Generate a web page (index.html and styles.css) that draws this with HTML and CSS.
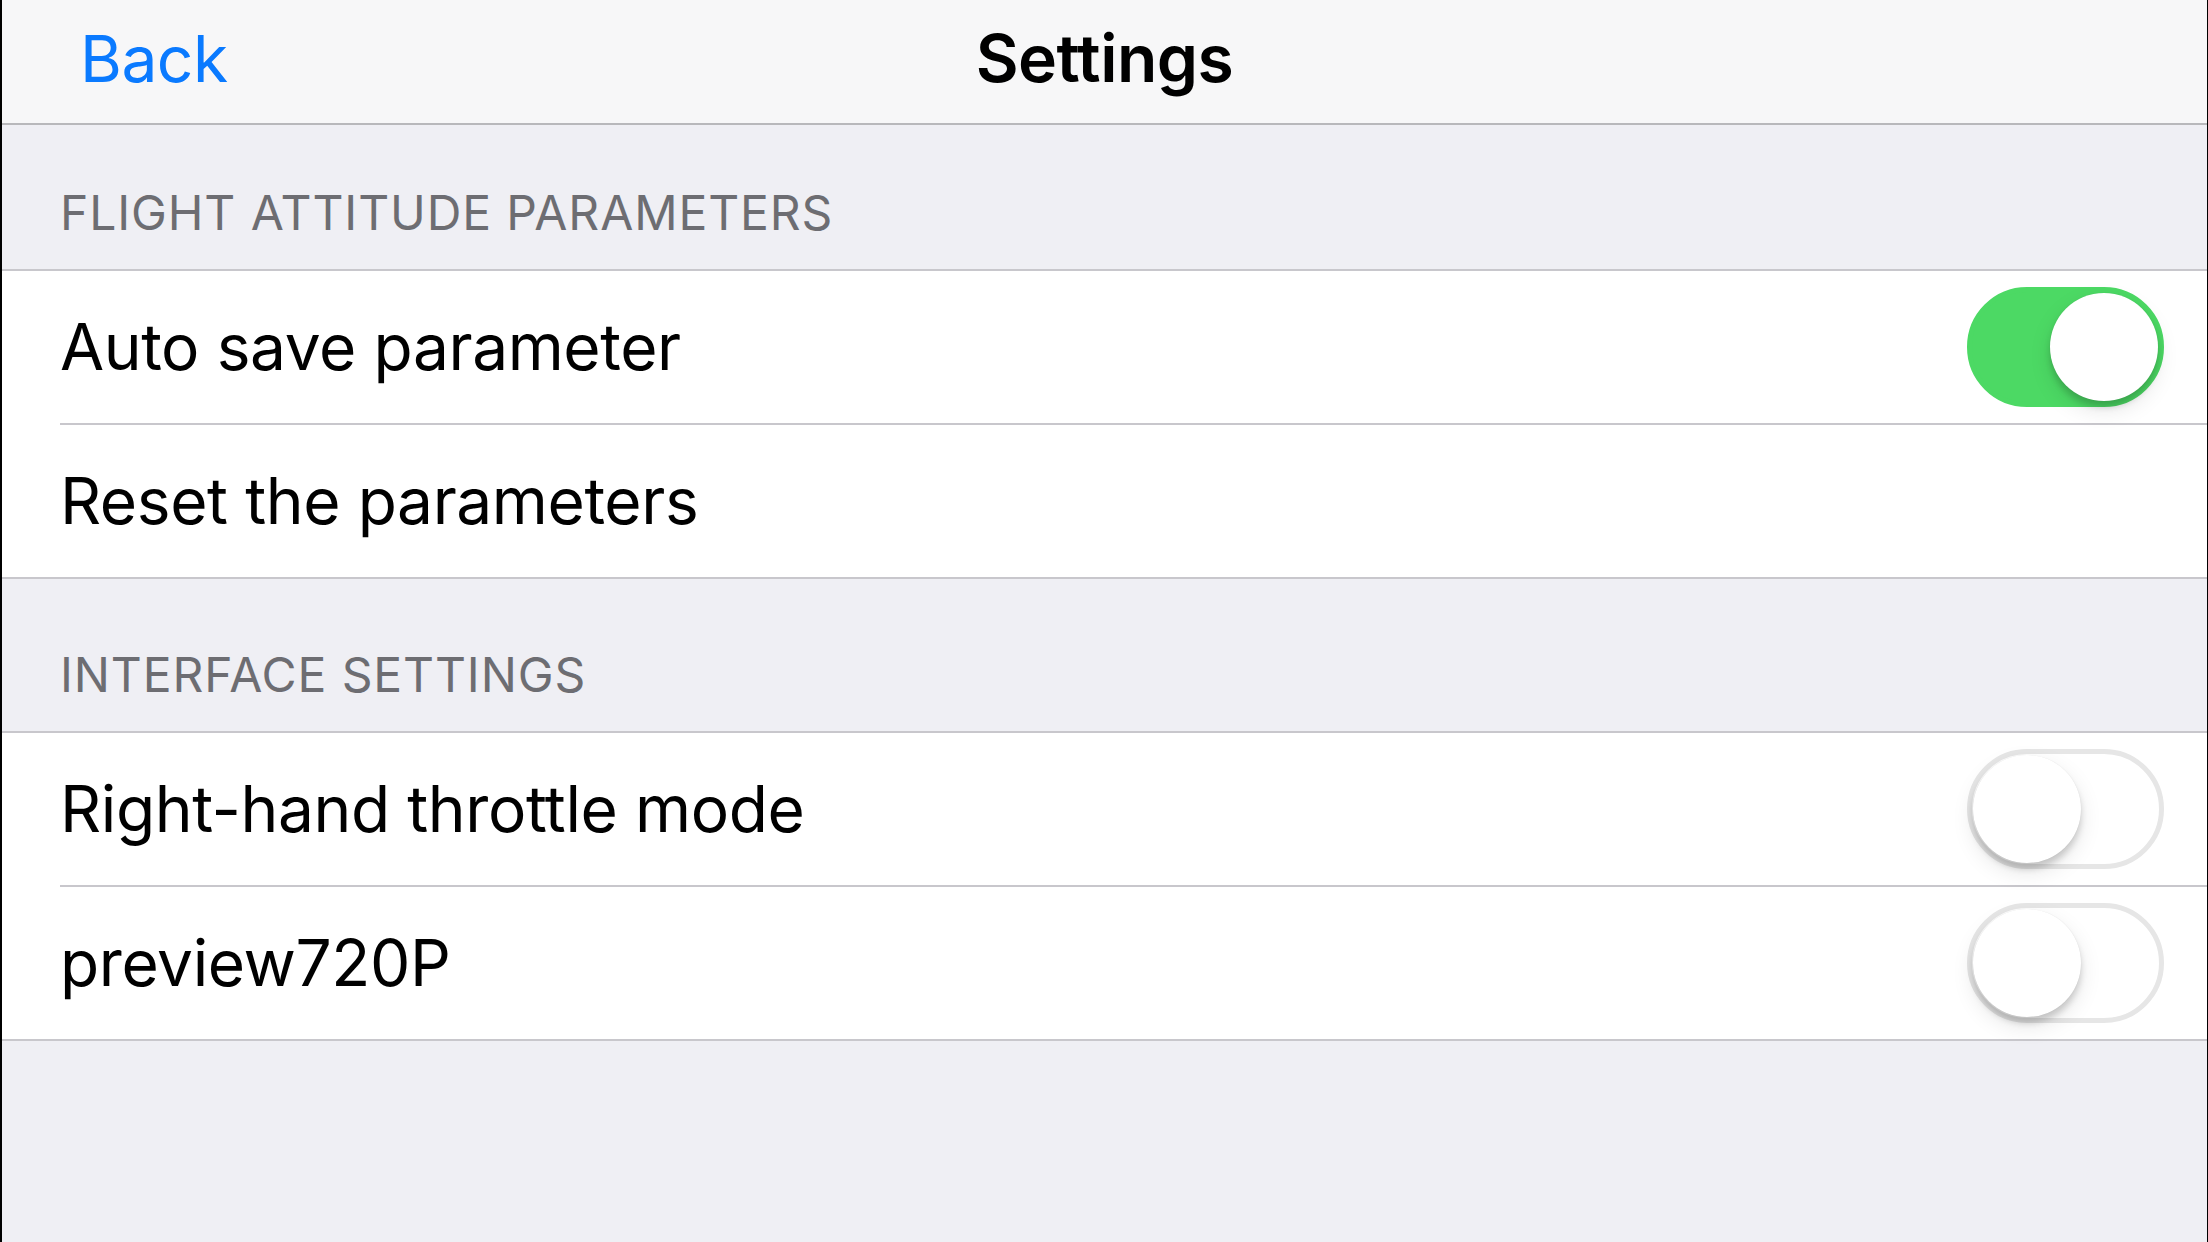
FILE: index.html
```html
<!DOCTYPE html>
<html>
<head>
	<meta charset="utf-8">
	<title>Settings</title>
	<link rel="stylesheet" href="styles.css">
</head>
<body>
	<div class="app">
		<header class="nav">
			<a class="nav-back">Back</a>
			<div class="nav-title">Settings</div>
		</header>

		<div class="section-header">FLIGHT ATTITUDE PARAMETERS</div>
		<div class="group">
			<div class="row">
				<span class="row-label">Auto save parameter</span>
				<div class="switch on"><div class="knob"></div></div>
			</div>
			<div class="row">
				<span class="row-label">Reset the parameters</span>
			</div>
		</div>

		<div class="section-header">INTERFACE SETTINGS</div>
		<div class="group">
			<div class="row">
				<span class="row-label">Right-hand throttle mode</span>
				<div class="switch"><div class="knob"></div></div>
			</div>
			<div class="row">
				<span class="row-label">preview720P</span>
				<div class="switch"><div class="knob"></div></div>
			</div>
		</div>
	</div>
</body>
</html>
```

FILE: styles.css
```css
html, body{
	margin: 0;
	height: 100%;
	background: #000;
}
.app{
	margin: 0 1px 0 2px;
	height: 100%;
	background: #efeff4;
	font-family: 'Inter', 'Helvetica Neue', sans-serif;
	display: flex;
	flex-direction: column;
}

/*--------Barra de navegacion-----------*/
.nav{
	height: 125px;
	border-bottom: 2px solid #b8b8bb;
	background: #f7f7f8;
	display: flex;
	align-items: center;
	justify-content: center;
	position: relative;
	padding-bottom: 8px;
	box-sizing: border-box;
}
.nav-back{
	position: absolute;
	left: 78px;
	top: 27px;
	font-size: 64px;
	line-height: 1;
	color: #0a7aff;
	letter-spacing: -0.5px;
}
.nav-title{
	font-size: 66px;
	line-height: 1;
	font-weight: 600;
	color: #000;
	letter-spacing: -0.5px;
}

/*--------Secciones-----------*/
.section-header{
	height: 144px;
	box-sizing: border-box;
	display: flex;
	align-items: flex-end;
	padding: 0 0 32px 58px;
	font-size: 48px;
	line-height: 1;
	color: #6d6d72;
	letter-spacing: 0.9px;
}
.group + .section-header{
	height: 152px;
}
.group{
	background: #fff;
	border-top: 2px solid #c8c7cc;
	border-bottom: 2px solid #c8c7cc;
}
.row{
	height: 152px;
	display: flex;
	align-items: center;
	justify-content: space-between;
	padding: 0 43px 0 0;
	margin-left: 58px;
	box-sizing: border-box;
}
.row + .row{
	border-top: 2px solid #c8c7cc;
	height: 154px;
}
.row-label{
	font-size: 64px;
	line-height: 1;
	color: #000;
	letter-spacing: -0.4px;
}

/*--------Interruptores-----------*/
.switch{
	width: 197px;
	height: 120px;
	border-radius: 60px;
	box-sizing: border-box;
	border: 5px solid #e6e6e6;
	background: #fff;
	display: flex;
	align-items: center;
	padding: 0 1px;
}
.switch .knob{
	width: 108px;
	height: 108px;
	border-radius: 50%;
	background: #fff;
	box-shadow: 0 6px 6px rgba(0,0,0,0.16), 0 9px 22px rgba(0,0,0,0.1), 0 0 1px rgba(0,0,0,0.1);
}
.switch.on{
	background: #4cd964;
	border-color: #4cd964;
	justify-content: flex-end;
}
```
